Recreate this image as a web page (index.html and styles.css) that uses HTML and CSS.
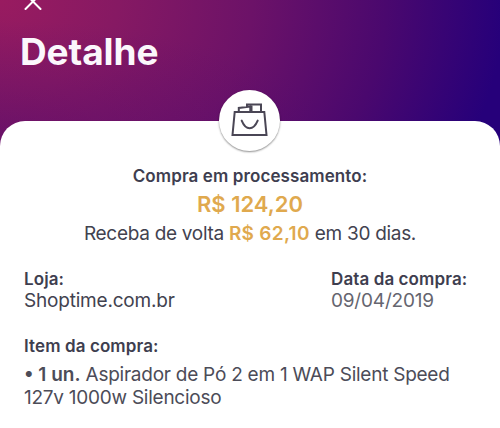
FILE: index.html
```html
<!DOCTYPE html>
<html lang="pt-BR">
<head>
    <meta charset="UTF-8">
    <title>Detalhe</title>
    <link rel="stylesheet" href="styles.css">
</head>
<body>

    <header class="header">
        <svg class="close" width="18" height="18" viewBox="0 0 18 18">
            <path d="M1.5 1 L16.5 16 M16.5 1 L1.5 16" />
        </svg>
        <h1 class="title">Detalhe</h1>
    </header>

    <main class="card">
        <div class="badge">
            <svg width="39" height="37" viewBox="0.5 1 39 37">
                <path d="M5.2 11 H34.8 L37 34 H3 Z" />
                <path d="M9.3 11 V7 L20.8 5.6 V11 M17.5 5.4 V3.4 H31.5 V11 M22 11 V5.8 H18" />
                <path class="smile" d="M12.2 19.6 C16.4 29.8 23.8 29.8 28.2 19.6" />
            </svg>
        </div>

        <section class="summary">
            <div class="label">Compra em processamento:</div>
            <div class="total">R$ 124,20</div>
            <div class="cashback">Receba de volta <span class="amount">R$ 62,10</span> em 30 dias.</div>
        </section>

        <section class="info">
            <div>
                <div class="label">Loja:</div>
                <div class="value">Shoptime.com.br</div>
            </div>
            <div class="date-col">
                <div class="label">Data da compra:</div>
                <div class="value date">09/04/2019</div>
            </div>
        </section>

        <section class="items">
            <div class="label">Item da compra:</div>
            <p class="item"><b>• 1 un.</b> Aspirador de Pó 2 em 1 WAP Silent Speed<br>127v 1000w Silencioso</p>
        </section>
    </main>

</body>
</html>
```

FILE: styles.css
```css
body {
    margin: 0;
    height: 428px;
    overflow: hidden;
    font-family: Inter, "Liberation Sans", sans-serif;
    color: #42424f;
    background:
        radial-gradient(ellipse 340px 120px at 0 140px, rgba(75, 8, 110, 0.35), rgba(75, 8, 110, 0)),
        radial-gradient(ellipse 515px 400px at 0 0, #991b60 0%, #861963 23%, #6c1268 49%, #4a086e 75%, #26007a 98%);
}

.header {
    display: flow-root;
    height: 121px;
    padding-left: 20px;
    box-sizing: border-box;
}

.close {
    display: block;
    margin: -7px 0 0 4px;
    fill: none;
    stroke: #fff;
    stroke-width: 2;
    stroke-linecap: round;
}

.title {
    margin: 19px 0 0;
    font-size: 37px;
    line-height: 44px;
    font-weight: 700;
    letter-spacing: -0.1px;
    color: #fbf7fc;
}

.card {
    position: relative;
    height: 307px;
    padding: 44px 24px 0;
    box-sizing: border-box;
    background: #fff;
    border-radius: 25px 25px 0 0;
}

/* round bag icon over the top edge of the card */
.badge {
    position: absolute;
    top: -31px;
    left: 219px;
    width: 61px;
    height: 61px;
    display: flex;
    justify-content: center;
    align-items: center;
    background: #fff;
    border-radius: 50%;
    box-shadow: 0 1px 2px rgba(0, 0, 0, 0.45);
}

.badge svg {
    fill: none;
    stroke: #4a4655;
    stroke-width: 2;
}

.badge .smile {
    stroke-linecap: round;
}

.summary {
    text-align: center;
    white-space: nowrap;
}

.label {
    font-size: 17px;
    line-height: 22px;
    font-weight: 600;
    letter-spacing: 0.1px;
    color: #3e3e4f;
}

.total {
    margin-top: 2px;
    font-size: 22px;
    line-height: 30px;
    font-weight: 600;
    color: #e0a94e;
}

.cashback {
    margin-top: 1px;
    font-size: 19px;
    line-height: 28px;
    letter-spacing: -0.3px;
}

.amount {
    font-weight: 600;
    letter-spacing: 0.3px;
    color: #e0a94e;
}

.info {
    display: flex;
    justify-content: space-between;
    margin-top: 20px;
}

.date-col {
    width: 145px;
    white-space: nowrap;
}

.value {
    padding-top: 1px;
    font-size: 19px;
    line-height: 20px;
    letter-spacing: -0.2px;
}

.date {
    color: #65656f;
}

.items {
    margin-top: 24px;
    white-space: nowrap;
}

.item {
    margin: 6px 0 0;
    font-size: 19px;
    line-height: 23px;
    letter-spacing: -0.25px;
    color: #4c4c58;
}

.item b {
    font-weight: 600;
    letter-spacing: 0;
}
```
